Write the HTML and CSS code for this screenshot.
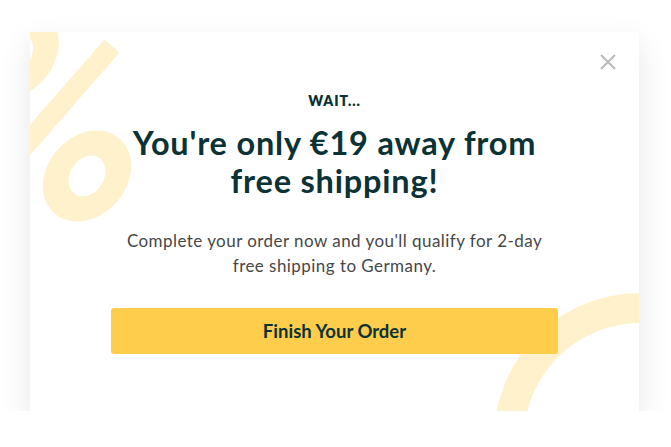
FILE: index.html
```html
<!DOCTYPE html>
<html lang="en">
<head>
    <meta charset="UTF-8">
    <meta name="viewport" content="width=device-width, initial-scale=1.0">
    <title>Free Shipping Popup</title>
    <link rel="stylesheet" href="styles.css">
</head>
<body>
    <div class="popup">
        <!-- Decorative shapes behind the content -->
        <svg class="decor" width="609" height="379" viewBox="0 0 609 379">
            <g fill="none" stroke="#fff1cc">
                <ellipse cx="0" cy="0" rx="30" ry="33" stroke-width="25" transform="translate(-15 21) skewX(-12)"></ellipse>
                <line x1="82" y1="14" x2="-20" y2="131" stroke-width="20"></line>
                <ellipse cx="0" cy="0" rx="30.5" ry="33" stroke-width="25" transform="translate(57 144) skewX(-12)"></ellipse>
                <circle cx="610" cy="407" r="131" stroke-width="30"></circle>
            </g>
        </svg>

        <button class="close-btn" type="button" aria-label="Close">
            <svg width="16" height="16" viewBox="0 0 16 16">
                <path d="M1 1 L15 15 M15 1 L1 15" stroke="#b9b9b9" stroke-width="2" fill="none"></path>
            </svg>
        </button>

        <div class="popup-content">
            <p class="eyebrow">WAIT...</p>
            <h1>You're only €19 away from<br>free shipping!</h1>
            <p class="message">Complete your order now and you'll qualify for 2-day<br>free shipping to Germany.</p>
            <button class="order-btn" type="button">Finish Your Order</button>
        </div>
    </div>
</body>
</html>
```

FILE: styles.css
```css
body {
    font-family: 'Lato', 'Liberation Sans', sans-serif;
    background-color: #fff;
    margin: 0;
    padding: 32px 33px 0 30px;
}
.popup {
    position: relative;
    width: 609px;
    height: 379px;
    background-color: #fff;
    overflow: hidden;
    box-shadow: 0 12px 30px rgba(0, 0, 0, 0.1);
}
.decor {
    position: absolute;
    left: 0;
    top: 0;
}
.close-btn {
    position: absolute;
    top: 22px;
    right: 23px;
    padding: 0;
    border: none;
    background: none;
    cursor: pointer;
}
.popup-content {
    position: relative;
    display: flex;
    flex-direction: column;
    align-items: center;
    padding-top: 59px;
    text-align: center;
    color: #0b3234;
}
.eyebrow {
    margin: 0;
    font-size: 14px;
    line-height: 20px;
    font-weight: 800;
    letter-spacing: 0.9px;
}
h1 {
    margin: 13px 0 0;
    font-size: 32.5px;
    line-height: 38px;
    font-weight: 700;
    letter-spacing: 0.8px;
}
.message {
    margin: 28px 0 0;
    font-size: 17px;
    line-height: 25px;
    font-weight: 400;
    letter-spacing: 0.45px;
    color: #474747;
}
.order-btn {
    margin-top: 30px;
    width: 447px;
    height: 46px;
    border: none;
    border-radius: 3px;
    background-color: #fecd4b;
    color: #0b3234;
    font-family: 'Lato', sans-serif;
    font-size: 18.5px;
    font-weight: 700;
    cursor: pointer;
}
```
